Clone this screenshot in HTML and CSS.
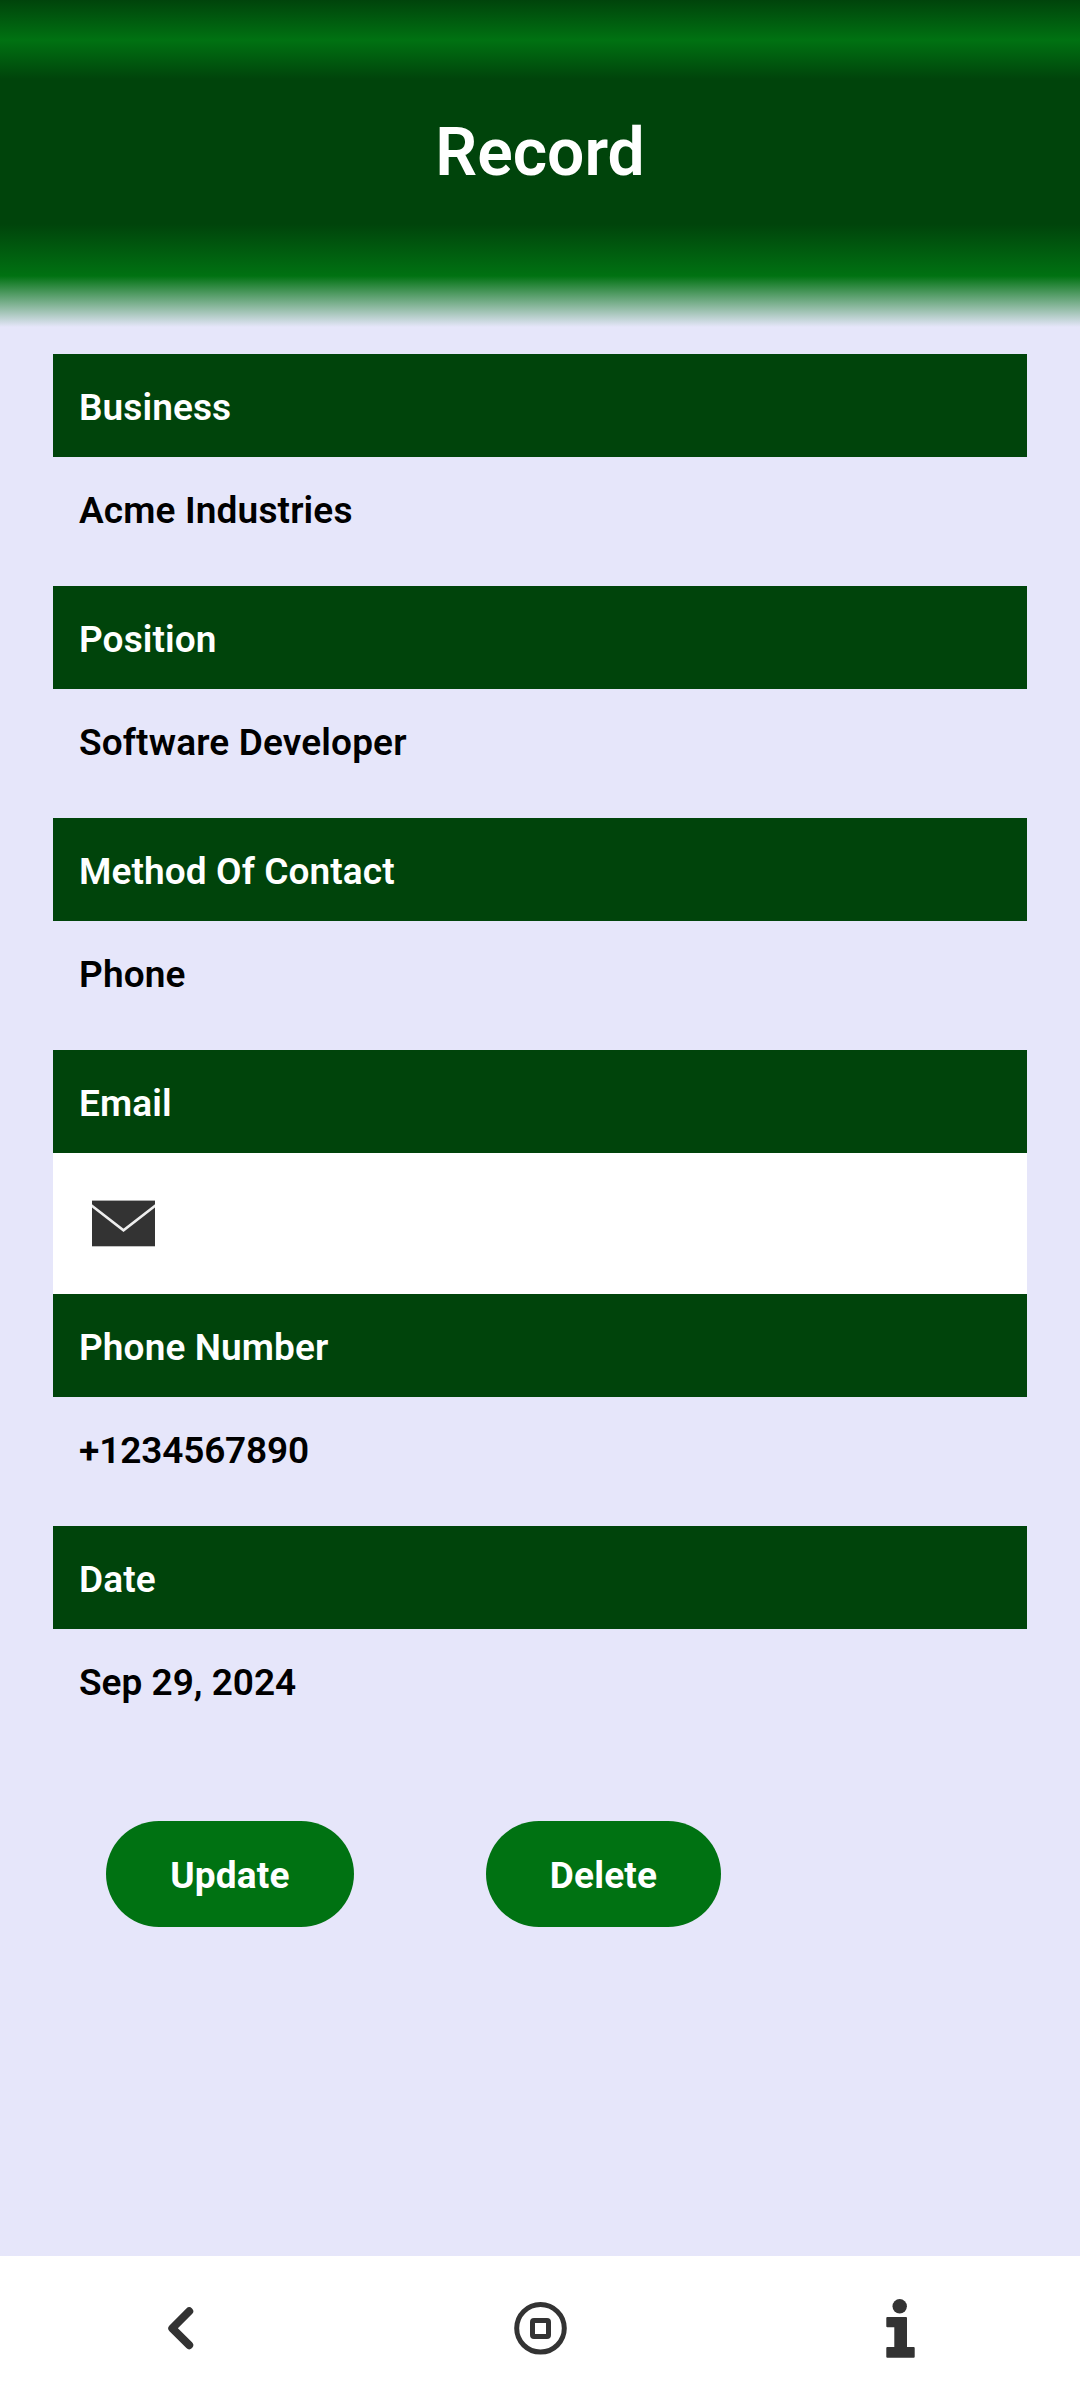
FILE: index.html
```html
<!DOCTYPE html>
<html lang="en">
<head>
<meta charset="utf-8">
<title>Record</title>
<link rel="stylesheet" href="styles.css">
</head>
<body>
<div class="screen">
  <header class="header"><h1 class="title">Record</h1></header>
  <main class="content">
    <dl class="record">
      <dt class="label">Business</dt>
      <dd class="value">Acme Industries</dd>
      <dt class="label">Position</dt>
      <dd class="value">Software Developer</dd>
      <dt class="label">Method Of Contact</dt>
      <dd class="value">Phone</dd>
      <dt class="label">Email</dt>
      <dd class="mail">
        <svg width="63" height="47" viewBox="0 0 63 47"><rect y="0.6" width="63" height="45.7" fill="#333"/><path d="M-1 5.2 31.5 30.3 64 5.2" fill="none" stroke="#eee" stroke-width="2.6"/></svg>
      </dd>
      <dt class="label">Phone Number</dt>
      <dd class="value value-numeric">+1234567890</dd>
      <dt class="label">Date</dt>
      <dd class="value value-date">Sep 29, 2024</dd>
    </dl>
    <div class="actions">
      <button class="button button-update">Update</button>
      <button class="button button-delete">Delete</button>
    </div>
  </main>
  <nav class="navbar">
    <a class="nav-item"><svg width="60" height="80" viewBox="0 0 60 80"><path d="M39.200 23.300 22.300 40.300 39.200 57.200" fill="none" stroke="#333" stroke-width="8" stroke-linecap="round" stroke-linejoin="round"/></svg></a>
    <a class="nav-item"><svg width="60" height="80" viewBox="0 0 60 80"><circle cx="30.5" cy="40.3" r="23.8" fill="none" stroke="#333" stroke-width="5"/><rect x="22.5" y="32.5" width="16" height="16" rx="1.5" fill="none" stroke="#333" stroke-width="5"/></svg></a>
    <a class="nav-item"><svg width="60" height="80" viewBox="0 0 60 80"><circle cx="29.7" cy="18.3" r="7.2" fill="#333"/><path d="M17.3 29H36q1 0 1 1V59h6.7q1 0 1 1v8.700q0 1-1 1H17.300q-1 0-1-1V60q0-1 1-1H24.300V39.300h-7q-1 0-1-1V30q0-1 1-1Z" fill="#333"/></svg></a>
  </nav>
</div>
</body>
</html>
```
FILE: styles.css
```css
* { box-sizing: border-box; }
body {
  margin: 0;
  background: #e6e6fa;
  font-family: Roboto, sans-serif;
}
.screen {
  height: 2400px;
  display: flex;
  flex-direction: column;
}
.header {
  height: 327px;
  padding-top: 114px;
  background: linear-gradient(#00440b 0, #007212 40px, #00440b 79px, #00440b 224px, #007212 276px, #e6e6fa 327px);
}
.title {
  margin: 0;
  color: #fff;
  font-size: 66px;
  line-height: 78px;
  font-weight: 600;
  text-align: center;
}
.content {
  flex: 1;
  padding: 27px 53px 0;
}
.record { margin: 0; }
.label, .value {
  padding: 2px 26px 0;
  font-size: 37px;
  line-height: 103px;
}
.label {
  height: 103px;
  background: #00440b;
  color: #fff;
  font-weight: 650;
  letter-spacing: 0.1px;
}
.value {
  height: 129px;
  margin: 0;
  color: #000;
  font-weight: 600;
  letter-spacing: 0.15px;
}
.value-numeric { letter-spacing: -0.15px; }
.value-date { letter-spacing: 0; }
.mail {
  height: 141px;
  margin: 0;
  padding-left: 39px;
  display: flex;
  align-items: center;
  background: #fff;
}
.actions {
  display: flex;
  gap: 132px;
  padding: 63px 53px 0;
}
.button {
  height: 106px;
  padding: 2px 0 0;
  border: 0;
  border-radius: 53px;
  background: #007212;
  color: #fff;
  font: 750 37px Roboto, sans-serif;
  letter-spacing: 0.2px;
}
.button-update { width: 248px; }
.button-delete { width: 235px; }
.navbar {
  height: 144px;
  display: grid;
  grid-template-columns: repeat(3, 1fr);
  background: #fff;
}
.nav-item {
  display: flex;
  align-items: center;
  justify-content: center;
}
```
